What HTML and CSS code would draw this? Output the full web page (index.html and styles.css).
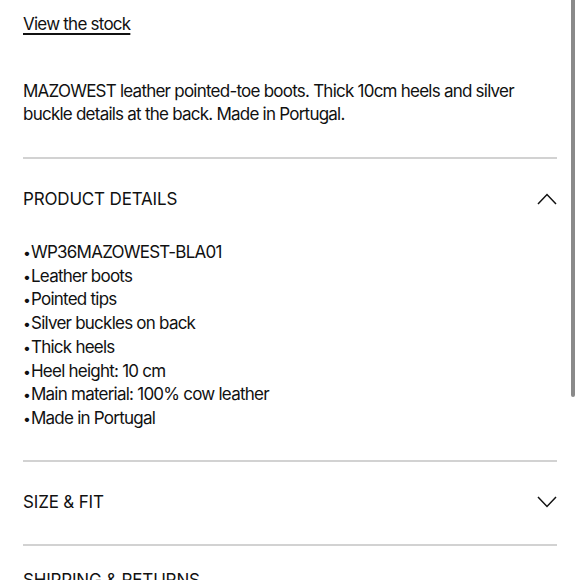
FILE: index.html
```html
<!DOCTYPE html>
<html lang="en">
<head>
<meta charset="utf-8">
<link rel="stylesheet" href="styles.css">
</head>
<body>
<div class="page">
  <a class="stock-link" href="#">View the stock</a>
  <p class="description">MAZOWEST leather pointed-toe boots. Thick 10cm heels and silver buckle details at the back. Made in Portugal.</p>

  <section class="accordion open">
    <div class="acc-head">
      <span class="acc-title">PRODUCT DETAILS</span>
      <svg class="chevron" width="20" height="12" viewBox="0 0 20 12"><polyline points="1,11 10,1.5 19,11" fill="none" stroke="#111" stroke-width="1.5"/></svg>
    </div>
    <ul class="details">
      <li>WP36MAZOWEST-BLA01</li>
      <li>Leather boots</li>
      <li>Pointed tips</li>
      <li>Silver buckles on back</li>
      <li>Thick heels</li>
      <li>Heel height: 10 cm</li>
      <li>Main material: 100% cow leather</li>
      <li>Made in Portugal</li>
    </ul>
  </section>

  <section class="accordion">
    <div class="acc-head">
      <span class="acc-title">SIZE &amp; FIT</span>
      <svg class="chevron" width="20" height="12" viewBox="0 0 20 12"><polyline points="1,1 10,10.5 19,1" fill="none" stroke="#111" stroke-width="1.5"/></svg>
    </div>
  </section>

  <section class="accordion last">
    <div class="acc-head">
      <span class="acc-title">SHIPPING &amp; RETURNS</span>
    </div>
  </section>
</div>
<div class="scrollbar"></div>
</body>
</html>
```
FILE: styles.css
```css
html, body {
  margin: 0;
  padding: 0;
  background: #fff;
  overflow: hidden;
}
body {
  font-family: Inter, "Liberation Sans", sans-serif;
  color: #111;
  font-size: 17px;
  line-height: 23.5px;
  letter-spacing: -0.045em;
}
.page {
  padding: 13px 23px 0 23px;
}
.stock-link {
  display: inline-block;
  color: #111;
  text-decoration: underline;
  text-underline-offset: 3px;
  text-decoration-thickness: 1.5px;
}
.description {
  margin: 43px 0 0 0;
}
.accordion {
  border-top: 2px solid #d2d2d2;
  margin-top: 30px;
}
.accordion + .accordion {
  margin-top: 0;
}
.acc-head {
  display: flex;
  justify-content: space-between;
  align-items: center;
  padding: 29px 0 30px 0;
}
.acc-title {
  letter-spacing: -0.01em;
}
.last .acc-head {
  padding-top: 23px;
}
.chevron {
  display: block;
}
.details {
  list-style: none;
  margin: 0;
  padding: 0 0 29px 0;
  line-height: 23.7px;
}
.details li::before {
  content: "\2022";
  display: inline-block;
  width: 8px;
  font-size: 14px;
  letter-spacing: 0;
}
.scrollbar {
  position: fixed;
  top: -6px;
  right: 5px;
  width: 4px;
  height: 403px;
  background: #8a8a8a;
  border-radius: 2px;
}
```
